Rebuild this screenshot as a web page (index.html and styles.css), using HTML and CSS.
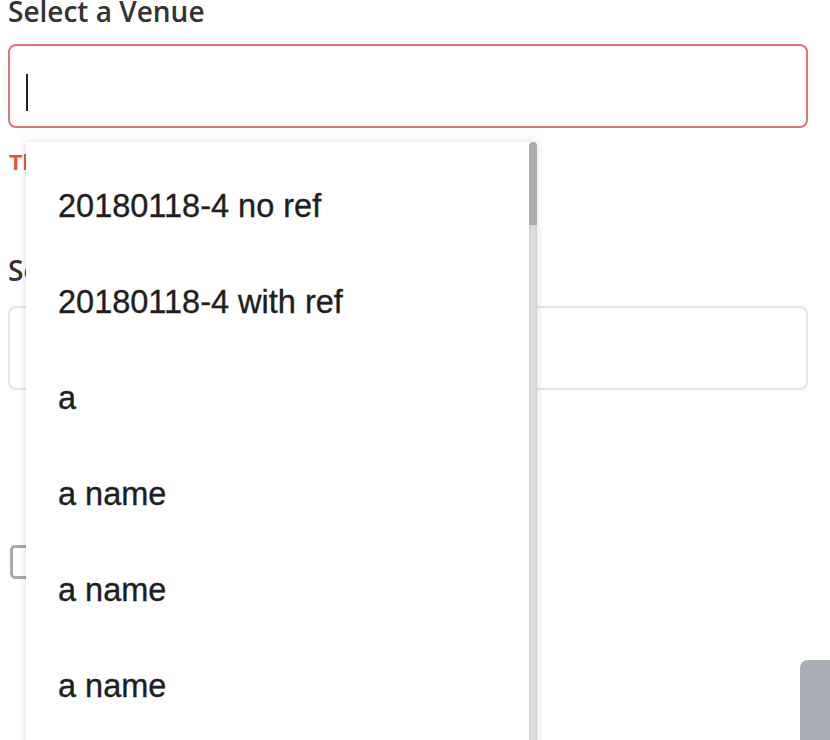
FILE: index.html
```html
<!DOCTYPE html>
<html>
<head>
<meta charset="utf-8">
<link rel="stylesheet" href="styles.css">
</head>
<body>
<div class="page">
  <div class="field">
    <div class="label label-first">Select a Venue</div>
    <div class="input input-error"><span class="caret"></span></div>
    <div class="error">This field is required</div>
  </div>
  <div class="field field-second">
    <div class="label">Select a Date</div>
    <div class="input"></div>
  </div>
  <div class="check-row">
    <span class="checkbox"></span>
  </div>
  <div class="btn-row">
    <span class="button"></span>
  </div>

  <div class="dropdown">
    <ul class="options">
      <li>20180118-4 no ref</li>
      <li>20180118-4 with ref</li>
      <li>a</li>
      <li>a name</li>
      <li>a name</li>
      <li>a name</li>
      <li>a name</li>
    </ul>
    <div class="scrollbar">
      <div class="thumb"></div>
      <div class="track"></div>
    </div>
  </div>
</div>
</body>
</html>
```
FILE: styles.css
```css
html, body {
  margin: 0;
  padding: 0;
  background: #fff;
  overflow: hidden;
  height: 740px;
}
.page {
  position: relative;
  width: 800px;
  padding-left: 8px;
}
.label {
  font-family: "Open Sans", sans-serif;
  font-weight: 600;
  font-size: 28px;
  line-height: 36px;
  color: #333;
}
.label-first {
  margin-top: -7px;
}
.input {
  box-sizing: border-box;
  margin-top: 15px;
  height: 84px;
  border: 2px solid #e4e4e4;
  border-radius: 8px;
  background: #fff;
  padding: 28px 0 0 16px;
}
.input-error {
  border-color: #df7474;
}
.caret {
  display: block;
  width: 2px;
  height: 37px;
  background: #222;
}
.error {
  font-family: "Liberation Sans", Arial, sans-serif;
  font-weight: bold;
  font-size: 22px;
  line-height: 30px;
  margin-top: 20px;
  padding-left: 1px;
  color: #e2533f;
}
.field-second {
  margin-top: 74px;
}
.field-second .input {
  margin-top: 18px;
}
.check-row {
  margin-top: 155px;
  padding-left: 2px;
}
.checkbox {
  display: block;
  box-sizing: border-box;
  width: 34px;
  height: 34px;
  border: 3px solid #a6a9af;
  border-radius: 5px;
}
.btn-row {
  display: flex;
  justify-content: flex-end;
  margin-top: 81px;
  margin-right: -30px;
}
.button {
  display: block;
  width: 38px;
  height: 100px;
  background: #a9adb6;
  border-radius: 8px;
}
.dropdown {
  position: absolute;
  left: 26px;
  top: 149px;
  width: 511px;
  height: 640px;
  display: flex;
  background: #fff;
  box-shadow: 0 0 8px rgba(0, 0, 0, 0.14);
}
.options {
  flex: 1;
  list-style: none;
  margin: 0;
  padding: 16px 0 0 0;
}
.options li {
  font-family: "Liberation Sans", Arial, sans-serif;
  font-size: 32.5px;
  line-height: 96px;
  height: 96px;
  padding-left: 32px;
  color: #1e1e1e;
  -webkit-text-stroke: 0.35px #1e1e1e;
  white-space: nowrap;
}
.scrollbar {
  width: 8px;
  display: flex;
  flex-direction: column;
}
.thumb {
  height: 83px;
  background: #a9abaf;
  border-radius: 4px 4px 0 0;
}
.track {
  flex: 1;
  background: linear-gradient(to right, #cfcfcf 0, #dedede 40%, #dedede 60%, #cfcfcf 100%);
}
```
